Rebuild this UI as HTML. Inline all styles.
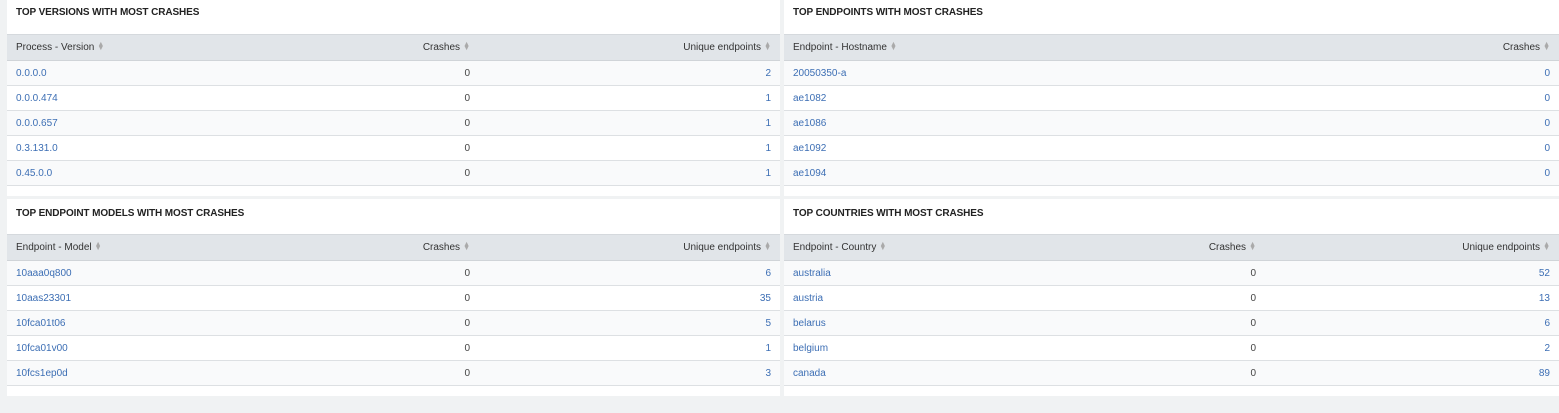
<!DOCTYPE html>
<html><head><style>
*{box-sizing:border-box;margin:0;padding:0}
body{width:1559px;height:413px;background:#f0f2f3;font-family:"Liberation Sans",sans-serif;font-size:10px;color:#333;position:relative;overflow:hidden}
.p{position:absolute;background:#fff}
.t{position:absolute;left:9px;top:7px;font-weight:bold;font-size:10px;color:#222;letter-spacing:-0.1px}
table{position:absolute;left:0;top:34px;width:100%;border-collapse:collapse}
th{background:#e1e5e9;height:26px;font-weight:normal;color:#333;text-align:left;padding:0 9px;border-top:1px solid #d5d9dd;border-bottom:1px solid #d0d4d8}
td{height:25px;padding:0 9px;border-bottom:1px solid #dde0e3;color:#444}
tr:nth-child(even) td{background:#f9fafb}
.r{text-align:right}
a{color:#3c6eb4;text-decoration:none}
.s{color:#aaa;font-size:7px;margin-left:3px;display:inline-block;line-height:4px;vertical-align:middle}
</style></head><body>
<div class="p" style="left:7px;top:0;width:773px;height:196px">
<div class="t">TOP VERSIONS WITH MOST CRASHES</div>
<table><tr><th>Process - Version<span class="s">▲<br>▼</span></th><th class="r" style="width:300px">Crashes<span class="s">▲<br>▼</span></th><th class="r" style="width:301px">Unique endpoints<span class="s">▲<br>▼</span></th></tr>
<tr><td><a>0.0.0.0</a></td><td class="r">0</td><td class="r"><a>2</a></td></tr>
<tr><td><a>0.0.0.474</a></td><td class="r">0</td><td class="r"><a>1</a></td></tr>
<tr><td><a>0.0.0.657</a></td><td class="r">0</td><td class="r"><a>1</a></td></tr>
<tr><td><a>0.3.131.0</a></td><td class="r">0</td><td class="r"><a>1</a></td></tr>
<tr><td><a>0.45.0.0</a></td><td class="r">0</td><td class="r"><a>1</a></td></tr>
</table></div>
<div class="p" style="left:784px;top:0;width:775px;height:196px">
<div class="t">TOP ENDPOINTS WITH MOST CRASHES</div>
<table><tr><th>Endpoint - Hostname<span class="s">▲<br>▼</span></th><th class="r">Crashes<span class="s">▲<br>▼</span></th></tr>
<tr><td><a>20050350-a</a></td><td class="r"><a>0</a></td></tr>
<tr><td><a>ae1082</a></td><td class="r"><a>0</a></td></tr>
<tr><td><a>ae1086</a></td><td class="r"><a>0</a></td></tr>
<tr><td><a>ae1092</a></td><td class="r"><a>0</a></td></tr>
<tr><td><a>ae1094</a></td><td class="r"><a>0</a></td></tr>
</table></div>
<div class="p" style="left:7px;top:199px;width:773px;height:197px">
<div class="t" style="top:9px">TOP ENDPOINT MODELS WITH MOST CRASHES</div>
<table style="top:35px"><tr><th>Endpoint - Model<span class="s">▲<br>▼</span></th><th class="r" style="width:300px">Crashes<span class="s">▲<br>▼</span></th><th class="r" style="width:301px">Unique endpoints<span class="s">▲<br>▼</span></th></tr>
<tr><td><a>10aaa0q800</a></td><td class="r">0</td><td class="r"><a>6</a></td></tr>
<tr><td><a>10aas23301</a></td><td class="r">0</td><td class="r"><a>35</a></td></tr>
<tr><td><a>10fca01t06</a></td><td class="r">0</td><td class="r"><a>5</a></td></tr>
<tr><td><a>10fca01v00</a></td><td class="r">0</td><td class="r"><a>1</a></td></tr>
<tr><td><a>10fcs1ep0d</a></td><td class="r">0</td><td class="r"><a>3</a></td></tr>
</table></div>
<div class="p" style="left:784px;top:199px;width:775px;height:197px">
<div class="t" style="top:9px">TOP COUNTRIES WITH MOST CRASHES</div>
<table style="top:35px"><tr><th>Endpoint - Country<span class="s">▲<br>▼</span></th><th class="r" style="width:300px">Crashes<span class="s">▲<br>▼</span></th><th class="r" style="width:294px">Unique endpoints<span class="s">▲<br>▼</span></th></tr>
<tr><td><a>australia</a></td><td class="r">0</td><td class="r"><a>52</a></td></tr>
<tr><td><a>austria</a></td><td class="r">0</td><td class="r"><a>13</a></td></tr>
<tr><td><a>belarus</a></td><td class="r">0</td><td class="r"><a>6</a></td></tr>
<tr><td><a>belgium</a></td><td class="r">0</td><td class="r"><a>2</a></td></tr>
<tr><td><a>canada</a></td><td class="r">0</td><td class="r"><a>89</a></td></tr>
</table></div>
</body></html>
